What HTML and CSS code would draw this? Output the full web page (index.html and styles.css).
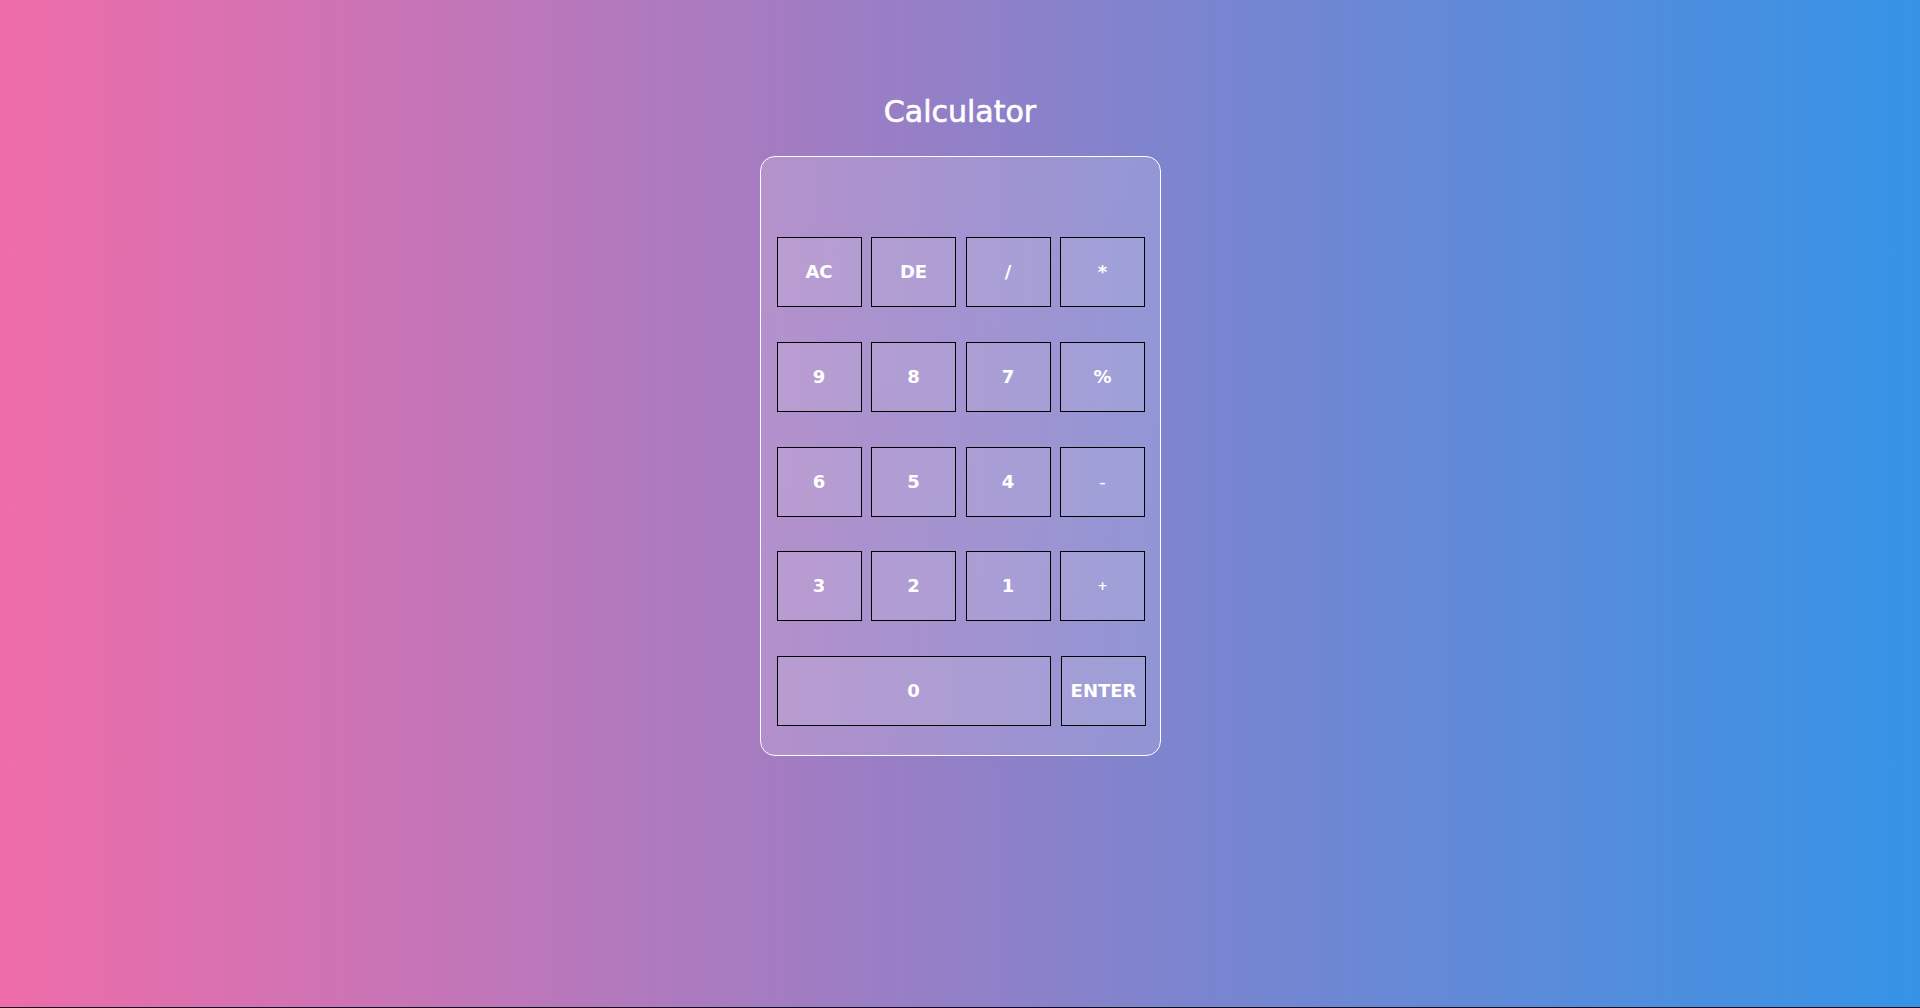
FILE: index.html
```html
<!DOCTYPE html>
<html lang="en">
<head>
<meta charset="utf-8">
<title>Calculator</title>
<link rel="stylesheet" href="styles.css">
</head>
<body>
<div class="page">
  <h1 class="title">Calculator</h1>
  <div class="calc">
    <div class="display"></div>
    <div class="keys">
      <button class="key">AC</button>
      <button class="key">DE</button>
      <button class="key">/</button>
      <button class="key">*</button>
      <button class="key">9</button>
      <button class="key">8</button>
      <button class="key">7</button>
      <button class="key">%</button>
      <button class="key">6</button>
      <button class="key">5</button>
      <button class="key">4</button>
      <button class="key key-minus">-</button>
      <button class="key">3</button>
      <button class="key">2</button>
      <button class="key">1</button>
      <button class="key key-small">+</button>
      <button class="key key-wide">0</button>
      <button class="key key-enter">ENTER</button>
    </div>
  </div>
</div>
</body>
</html>
```

FILE: styles.css
```css
html {
  margin: 0;
  background: #0b0b1c;
}
body {
  margin: 0;
  height: 1007px;
  overflow: hidden;
  background: linear-gradient(to right, #ef6ca9 0%, #3593e6 100%);
  font-family: "DejaVu Sans", sans-serif;
}
.page {
  display: flex;
  flex-direction: column;
  align-items: center;
}
.title {
  margin: 94px 0 0;
  font-size: 30px;
  font-weight: normal;
  line-height: 35px;
  color: #fff;
  -webkit-text-stroke: 0.6px #fff;
}
.calc {
  margin-top: 27px;
  width: 370px;
  padding: 0 13px 29px 16px;
  border: 1px solid #fff;
  border-radius: 15px;
  background: linear-gradient(135deg, rgba(255,255,255,0.17) 0%, rgba(255,255,255,0.14) 100%);
}
.display {
  height: 80px;
}
.keys {
  display: grid;
  grid-template-columns: repeat(4, 85px);
  grid-auto-rows: 70px;
  column-gap: 9.5px;
  row-gap: 34.75px;
}
.key {
  box-sizing: border-box;
  margin: 0;
  padding: 0;
  border: 1.5px solid #000;
  background: rgba(255,255,255,0.1);
  color: #fff;
  font-family: "DejaVu Sans", sans-serif;
  font-weight: bold;
  font-size: 18px;
  line-height: 1;
}
.key-small {
  font-size: 12px;
}
.key-minus {
  font-size: 18px;
  font-weight: normal;
}
.key-wide {
  grid-column: span 3;
}
.key-enter {
  transform: translateX(1px);
}
```
